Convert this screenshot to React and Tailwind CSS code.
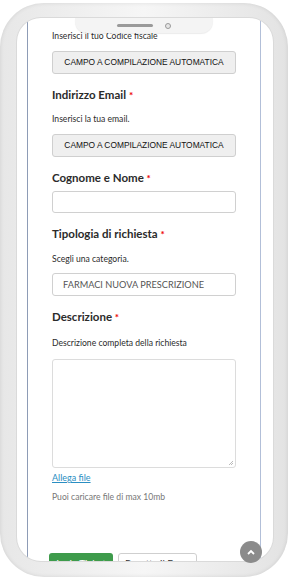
import React from "react";

const Label = ({ children, className = "" }) => (
  <div className={"text-[11.5px] leading-[16px] font-bold text-[#2b2b2b] " + className}>
    {children} <span className="text-[#e00] text-[10px]">*</span>
  </div>
);

const Help = ({ children, className = "" }) => (
  <div className={"text-[8.6px] leading-[12px] text-[#2b2b2b] " + className}>{children}</div>
);

const AutoButton = ({ className = "" }) => (
  <div
    className={
      "h-[23px] w-[184px] rounded-[3px] border border-[#cfcfcf] bg-[#efefef] flex items-center justify-center font-['Liberation_Sans',Arial,sans-serif] text-[8.4px] text-[#111] " +
      className
    }
  >
    CAMPO A COMPILAZIONE AUTOMATICA
  </div>
);

export default function App() {
  return (
    <div className="w-[288px] h-[578px] bg-white overflow-hidden relative font-['Lato','Noto_Sans',sans-serif]">
      {/* phone body */}
      <div className="mt-[3px] h-[574px] w-[288px] rounded-[44px] bg-gradient-to-r from-[#e7e7e7] via-[#f6f6f6] to-[#e3e3e3] shadow-[inset_0_0_4px_rgba(0,0,0,0.10)] pl-[17px] pr-[15px] pt-[15px] pb-[16px]">
        {/* screen */}
        <div className="relative h-[543px] w-[256px] rounded-[24px] bg-white overflow-hidden shadow-[0_0_0_1px_#dadada]">
          {/* notch */}
          <div className="absolute left-[58px] top-0 z-10 h-[15px] w-[138px] rounded-b-[12px] bg-[#f4f4f4] shadow-[0_1px_1px_rgba(0,0,0,0.08)] flex items-center justify-center gap-[12px]">
            <div className="h-[3px] w-[36px] rounded-full bg-[#9a9a9a]" />
            <div className="h-[6px] w-[6px] rounded-full border border-[#9a9a9a] bg-[#e6e6e6]" />
          </div>

          <div className="ml-[10px] h-full w-[234px] border-l border-r border-l-[#8e9cb6] border-r-[#b2bfd8] pl-[24px] pr-[24px] pt-[12px]">
            <Help>Inserisci il tuo Codice fiscale</Help>
            <AutoButton className="mt-[9px]" />

            <Label className="mt-[13px]">Indirizzo Email</Label>
            <Help className="mt-[10px]">Inserisci la tua email.</Help>
            <AutoButton className="mt-[9px]" />

            <Label className="mt-[13px]">Cognome e Nome</Label>
            <div className="mt-[5px] h-[22px] w-[184px] rounded-[3px] border border-[#d0d0d0] bg-white" />

            <Label className="mt-[13px]">Tipologia di richiesta</Label>
            <Help className="mt-[11px]">Scegli una categoria.</Help>
            <div className="mt-[8px] h-[23px] w-[184px] rounded-[3px] border border-[#d0d0d0] bg-white flex items-center pl-[10px] text-[9.2px] text-[#555]">
              FARMACI NUOVA PRESCRIZIONE
            </div>

            <Label className="mt-[13px]">Descrizione</Label>
            <Help className="mt-[12px]">Descrizione completa della richiesta</Help>
            <div className="relative mt-[10px] h-[109px] w-[184px] rounded-[3px] border border-[#dcdcdc] bg-white">
              <svg className="absolute right-[1px] bottom-[1px]" width="6" height="6" viewBox="0 0 6 6">
                <path d="M5 1 L1 5 M5 3 L3 5" stroke="#aaa" strokeWidth="0.8" />
              </svg>
            </div>

            <div className="mt-[4px] text-[9px] leading-[12px] text-[#2a8ec2] underline">Allega file</div>
            <div className="mt-[7px] text-[8.6px] leading-[12px] text-[#777]">Puoi caricare file di max 10mb</div>

            <div className="mt-[50px] -ml-[3px] flex gap-[5px]">
              <div className="h-[26px] w-[64px] rounded-[3px] bg-[#3e9b4b] text-white text-[10px] leading-[12px] pt-[4px] text-center">
                Invia Ticket
              </div>
              <div className="h-[26px] w-[79px] rounded-[3px] border border-[#cfcfcf] bg-white text-[#333] text-[10px] leading-[12px] pt-[3px] text-center">
                Resetta il Form
              </div>
            </div>
          </div>
        </div>
      </div>

      {/* scroll to top */}
      <div className="absolute left-[240px] top-[541px] h-[22px] w-[22px] rounded-full bg-[#8b8b8b] flex items-center justify-center">
        <svg width="8" height="6" viewBox="0 0 8 6">
          <path d="M1 5 L4 2 L7 5" fill="none" stroke="#fff" strokeWidth="1.8" />
        </svg>
      </div>
    </div>
  );
}
